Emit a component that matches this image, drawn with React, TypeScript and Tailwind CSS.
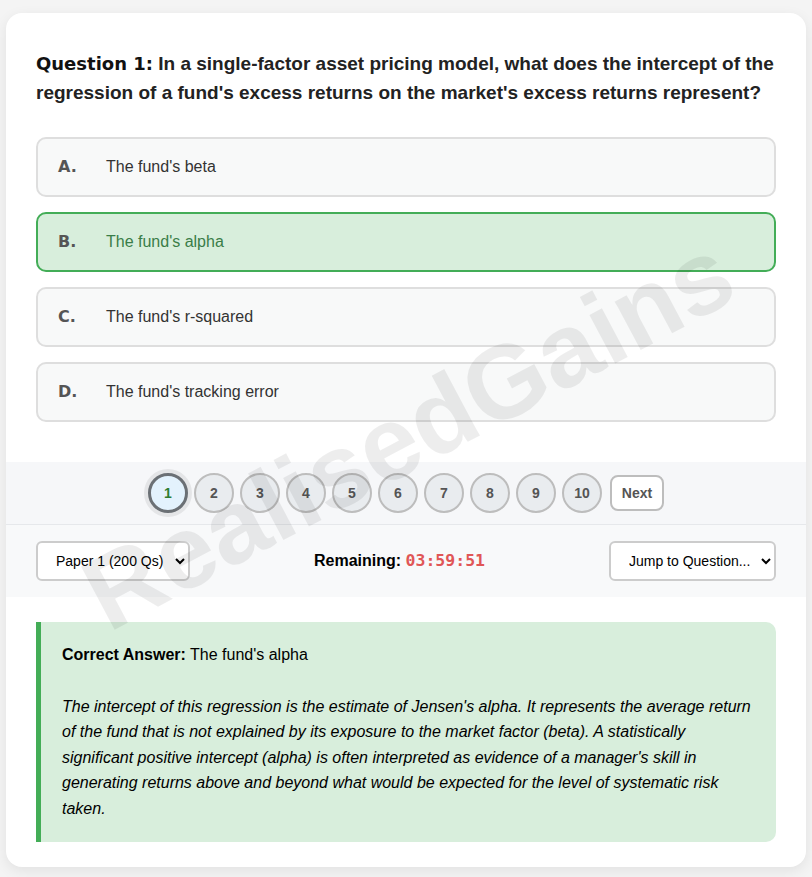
import React, { useState } from 'react';

const options = [
  { key: 'A', text: "The fund's beta" },
  { key: 'B', text: "The fund's alpha" },
  { key: 'C', text: "The fund's r-squared" },
  { key: 'D', text: "The fund's tracking error" },
];

const App: React.FC = () => {
  const [selected, setSelected] = useState('B');
  const [current, setCurrent] = useState(1);

  return (
    <div className="min-h-screen bg-[#f4f4f4] pt-[13px] pb-[10px] font-['Liberation_Sans',Arial,sans-serif]">
      <div className="relative mx-auto w-[800px] overflow-hidden rounded-[16px] bg-white shadow-[0_4px_14px_rgba(0,0,0,0.08)]">
        {/* watermark */}
        <div className="pointer-events-none absolute left-[402px] top-[420px] z-10 -translate-x-1/2 -translate-y-1/2 -rotate-[28deg] select-none whitespace-nowrap text-[104px] font-bold text-black/[0.07]">
          RealisedGains
        </div>

        {/* question */}
        <div className="px-[30px] pt-[36px]">
          <p className="text-[19px] font-bold leading-[29px] text-[#222]">
            <span className="font-['DejaVu_Sans',Verdana,sans-serif] text-[18px] text-[#111]">Question 1:</span>{' '}
            In a single-factor asset pricing model, what does the intercept of the regression of a fund's excess returns on the market's excess returns represent?
          </p>

          <div className="mt-[30px] mb-[40px] flex flex-col gap-[15px]">
            {options.map((o) => {
              const active = o.key === selected;
              return (
                <button
                  key={o.key}
                  onClick={() => setSelected(o.key)}
                  className={`flex h-[60px] items-center rounded-[10px] border-2 pl-[20px] text-left text-[16px] ${
                    active ? 'border-[#43ad57] bg-[#d8eedc] text-[#3a7d48]' : 'border-[#dedede] bg-[#f8f9f9] text-[#333]'
                  }`}
                >
                  <span className="w-[48px] font-['DejaVu_Sans',Verdana,sans-serif] font-bold text-[#555]">{o.key}.</span>
                  <span>{o.text}</span>
                </button>
              );
            })}
          </div>
        </div>

        {/* pager */}
        <div className="flex items-center justify-center bg-[#f6f7f9] py-[11px]">
          <div className="flex items-center gap-[6px]">
            {Array.from({ length: 10 }, (_, i) => i + 1).map((n) => (
              <button
                key={n}
                onClick={() => setCurrent(n)}
                className={
                  n === current
                    ? 'flex h-[40px] w-[40px] items-center justify-center rounded-full border-[3px] border-[#6b7075] bg-[#e3f2fd] text-[14px] font-bold text-[#2e7d32] shadow-[0_0_0_4px_rgba(0,0,0,0.07)]'
                    : 'flex h-[40px] w-[40px] items-center justify-center rounded-full border-2 border-[#bdbdbd] bg-[#e9ecef] text-[14px] font-bold text-[#555]'
                }
              >
                {n}
              </button>
            ))}
          </div>
          <button className="ml-[8px] h-[36px] w-[54px] rounded-[8px] border-2 border-[#bdbdbd] bg-white text-[14px] font-bold text-[#555]">
            Next
          </button>
        </div>

        {/* controls */}
        <div className="flex items-center justify-between border-t border-[#e6e8eb] bg-[#f8f9fa] px-[30px] py-[16px]">
          <select className="h-[40px] w-[154px] rounded-[6px] border-2 border-[#cccccc] bg-white pl-[14px] pr-[4px] text-[14px] text-black">
            <option>Paper 1 (200 Qs)</option>
            <option>Paper 2 (200 Qs)</option>
          </select>
          <div className="text-[16px] font-bold text-black">
            Remaining:{' '}
            <span className="font-['DejaVu_Sans_Mono',monospace] text-[16.5px] text-[#e05656]">03:59:51</span>
          </div>
          <select className="h-[40px] w-[167px] rounded-[6px] border-2 border-[#cccccc] bg-white pl-[14px] pr-[4px] text-[14px] text-black">
            <option>Jump to Question...</option>
            {Array.from({ length: 10 }, (_, i) => (
              <option key={i}>Question {i + 1}</option>
            ))}
          </select>
        </div>

        {/* explanation */}
        <div className="px-[30px] pt-[25px] pb-[25px]">
          <div className="rounded-r-[10px] border-l-[5px] border-[#43ad57] bg-[#d8eedc] px-[21px] pt-[20px] pb-[21px] text-[16px] leading-[25.5px] text-black">
            <p>
              <span className="font-bold">Correct Answer:</span> The fund's alpha
            </p>
            <p className="mt-[26px] italic">
              The intercept of this regression is the estimate of Jensen's alpha. It represents the average return of the fund that is not explained by its exposure to the market factor (beta). A statistically significant positive intercept (alpha) is often interpreted as evidence of a manager's skill in generating returns above and beyond what would be expected for the level of systematic risk taken.
            </p>
          </div>
        </div>
      </div>
    </div>
  );
};

export default App;
